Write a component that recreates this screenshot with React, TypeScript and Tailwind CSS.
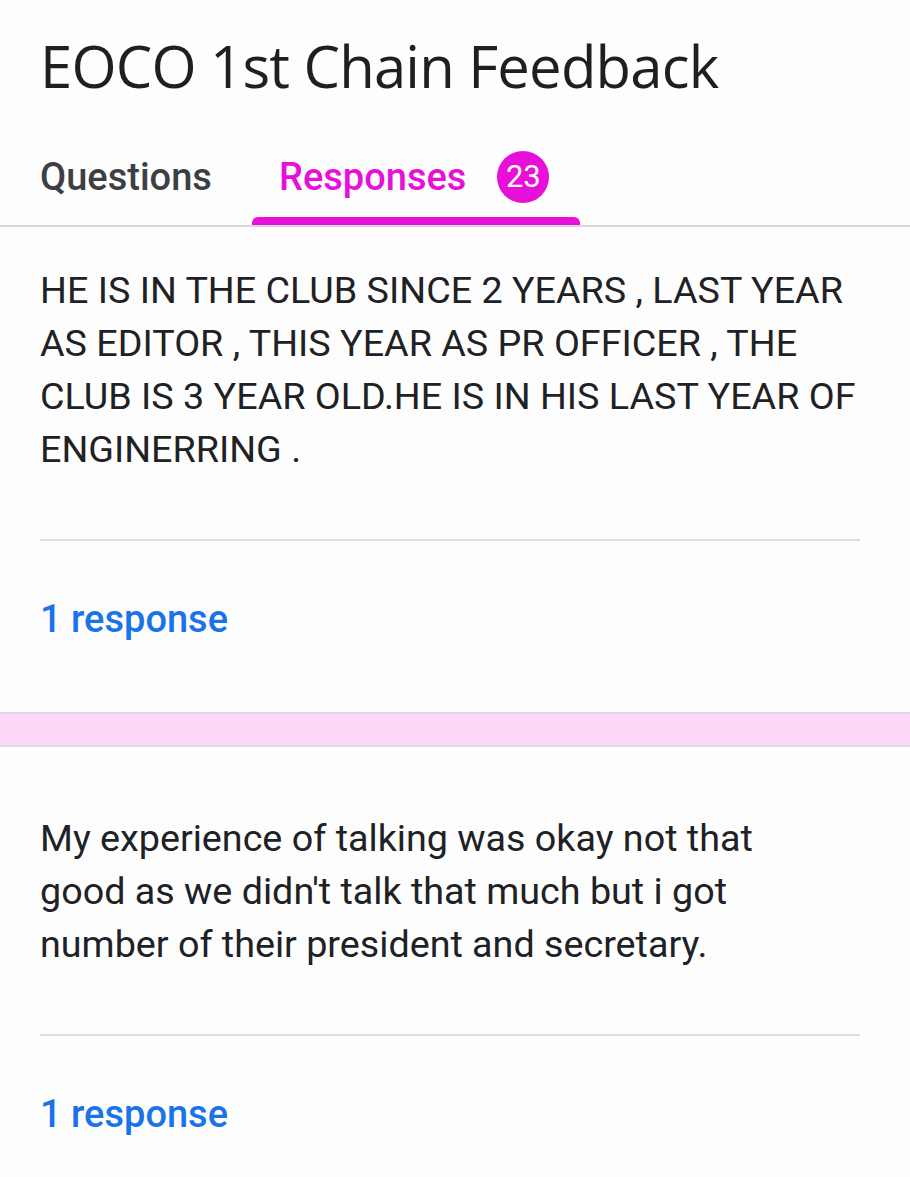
import React from "react";

const ResponseCard = ({
  lines,
  topPad,
}: {
  lines: string[];
  topPad: string;
}) => {
  return (
    <div className={`bg-[#fdfdfd] ${topPad}`}>
      <p className="px-[40px] text-[37.7px] leading-[53px] text-[#202124] whitespace-nowrap font-['Roboto',sans-serif]">
        {lines.map((l, i) => (
          <span key={i} className="block">
            {l}
          </span>
        ))}
      </p>
      <div className="ml-[40px] mr-[50px] mt-[63px] h-[2px] bg-[#dedde2]" />
      <div className="pl-[40px] pt-[52px] pb-[66px] text-[38px] leading-[53px] font-medium text-[#1a73e8] font-['Roboto',sans-serif]">
        1 response
      </div>
    </div>
  );
};

const App = () => {
  return (
    <div className="w-[910px] h-[1177px] overflow-hidden bg-[#fdfdfd]">
      <header className="bg-[#fdfdfd] border-b-2 border-[#d6d5da] shadow-[0_2px_3px_rgba(0,0,0,0.06)]">
        <h1 className="pl-[40px] pt-[30px] text-[58px] leading-[72px] text-[#1f1f1f] font-['Open_Sans',sans-serif] tracking-[-0.8px]">
          EOCO 1st Chain Feedback
        </h1>
        <nav className="mt-[35px] flex h-[88px] font-['Roboto',sans-serif]">
          <div className="w-[252px] pl-[40px] flex items-center pb-[8px] text-[38px] font-medium text-[#3c4043]">
            Questions
          </div>
          <div className="relative w-[328px] pl-[27px] flex items-center pb-[8px] text-[38px] font-medium text-[#e80fd8]">
            Responses
            <span className="ml-[31px] w-[52px] h-[52px] rounded-full bg-[#e80fd8] text-white text-[31px] font-normal flex items-center justify-center font-['Roboto',sans-serif]">
              23
            </span>
            <span className="absolute left-0 right-0 bottom-0 h-[8px] rounded-t-[6px] bg-[#e80fd8]" />
          </div>
        </nav>
      </header>

      <ResponseCard
        topPad="pt-[37px]"
        lines={[
          "HE IS IN THE CLUB SINCE 2 YEARS , LAST YEAR",
          "AS EDITOR , THIS YEAR AS PR OFFICER , THE",
          "CLUB IS 3 YEAR OLD.HE IS IN HIS LAST YEAR OF",
          "ENGINERRING .",
        ]}
      />

      <div className="h-[35px] bg-[#fcd9f8] border-y-2 border-[#dcdae0]" />

      <ResponseCard
        topPad="pt-[65px]"
        lines={[
          "My experience of talking was okay not that",
          "good as we didn't talk that much but i got",
          "number of their president and secretary.",
        ]}
      />
    </div>
  );
};

export default App;
